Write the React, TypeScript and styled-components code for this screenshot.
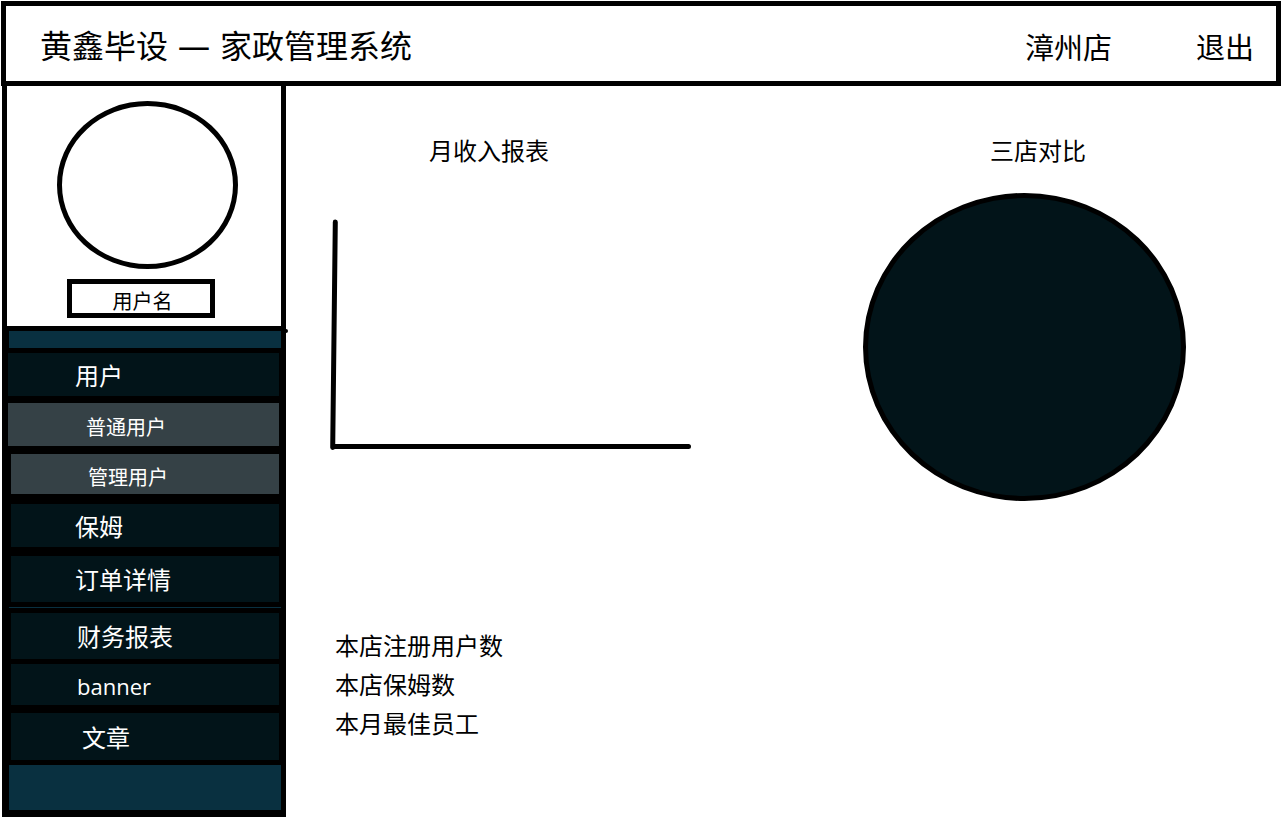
import React from 'react';
import styled, { createGlobalStyle } from 'styled-components';

const ink = '#000';
const navy = '#021419';
const slate = '#354146';
const teal = '#093040';

const GlobalStyle = createGlobalStyle`
  *, *::before, *::after { box-sizing: border-box; }
  body {
    margin: 0;
    background: #fff;
    color: ${ink};
    font-family: 'Open Sans', 'Noto Sans CJK SC', sans-serif;
    font-size: 24px;
    line-height: 32px;
  }
  h1, h2, p, ul { margin: 0; padding: 0; font-weight: 400; }
  ul { list-style: none; }
`;

const Page = styled.div`
  display: flex;
  flex-direction: column;
  min-height: 100vh;
  padding: 1px 3px 0 1px;
`;

const Header = styled.header`
  display: flex;
  align-items: center;
  justify-content: space-between;
  height: 85px;
  padding: 4px 22px 0 34px;
  border: 5px solid ${ink};
`;

const Title = styled.h1`
  display: flex;
  gap: 10px;
  font-size: 32px;
  line-height: 44px;
`;

const HeaderActions = styled.div`
  display: flex;
  gap: 84px;
  padding-top: 4px;
`;

const HeaderButton = styled.button`
  padding: 0;
  border: 0;
  background: none;
  color: inherit;
  font-family: inherit;
  font-size: 29px;
  line-height: 40px;
  cursor: pointer;
`;

const Body = styled.div`
  display: flex;
  flex: 1;
  align-items: flex-start;
  padding-left: 1px;
`;

const Sidebar = styled.aside`
  flex: 0 0 284px;
  border: solid ${ink};
  border-width: 0 5px 7px;
`;

const Profile = styled.section`
  position: relative;
  padding: 15px 43px 8px 50px;
  border-bottom: 5px solid ${ink};

  &::after {
    content: '';
    position: absolute;
    right: -7px;
    bottom: -7px;
    width: 4px;
    height: 4px;
    border-radius: 2px;
    background: ${ink};
  }
`;

const Avatar = styled.div`
  height: 168px;
  border: 5px solid ${ink};
  border-radius: 50%;
`;

const UserName = styled.input`
  display: block;
  width: 148px;
  height: 39px;
  margin: 10px 0 0 10px;
  padding: 4px 0 0 3px;
  border: 5px solid ${ink};
  background: #fff;
  color: inherit;
  font-family: inherit;
  font-size: 20px;
  text-align: center;
`;

const Nav = styled.nav`
  background: ${ink};
`;

const Band = styled.div<{ $height: number }>`
  height: ${(p) => p.$height}px;
  margin-left: 2px;
  background: ${teal};
`;

const Menu = styled.ul`
  padding: 5px 0 0;
`;

const MenuItem = styled.li<{ $gap: number; $wide?: boolean }>`
  padding: 0 2px ${(p) => p.$gap}px ${(p) => (p.$wide ? 1 : 4)}px;
`;

const MenuLink = styled.a<{ $height: number; $size: number; $sub?: boolean; $indent: number }>`
  display: flex;
  align-items: center;
  height: ${(p) => p.$height}px;
  padding: ${(p) => (p.$sub ? 7 : 2)}px 0 0 ${(p) => p.$indent}px;
  background: ${(p) => (p.$sub ? slate : navy)};
  color: #fff;
  font-size: ${(p) => p.$size}px;
  text-decoration: none;
`;

const Rule = styled.li`
  height: 1px;
  margin: 0 0 5px 2px;
  background: ${teal};
`;

const Main = styled.main`
  flex: 1;
  min-width: 0;
  padding: 49px 95px 0 44px;
`;

const Charts = styled.div`
  display: grid;
  grid-template-columns: minmax(0, 361px) minmax(0, 323px);
  justify-content: space-between;
`;

const PanelTitle = styled.h2<{ $indent: number }>`
  padding-left: ${(p) => p.$indent}px;
  font-size: 24px;
  line-height: 32px;
  white-space: nowrap;
`;

const Axes = styled.svg`
  display: block;
  width: 100%;
  margin-top: 51px;
`;

const Pie = styled.div`
  height: 308px;
  margin-top: 26px;
  border: 5px solid ${ink};
  border-radius: 50%;
  background: ${navy};
`;

const Stats = styled.ul`
  padding: 125px 0 0 5px;
  line-height: 39px;
`;

type Entry = {
  label: string;
  height: number;
  gap: number;
  indent: number;
  size: number;
  sub?: boolean;
  wide?: boolean;
  ruled?: boolean;
};

const entries: Entry[] = [
  { label: '用户', height: 43, gap: 7, indent: 67, size: 24, wide: true },
  { label: '普通用户', height: 43, gap: 8, indent: 78, size: 20, sub: true, wide: true },
  { label: '管理用户', height: 40, gap: 10, indent: 77, size: 20, sub: true },
  { label: '保姆', height: 43, gap: 9, indent: 64, size: 24 },
  { label: '订单详情', height: 46, gap: 5, indent: 64, size: 24, ruled: true },
  { label: '财务报表', height: 46, gap: 5, indent: 66, size: 24 },
  { label: 'banner', height: 41, gap: 8, indent: 66, size: 22 },
  { label: '文章', height: 47, gap: 5, indent: 71, size: 24 },
];

export default function App() {
  return (
    <>
      <GlobalStyle />
      <Page>
        <Header>
          <Title>
            <span>黄鑫毕设</span>
            <span>—</span>
            <span>家政管理系统</span>
          </Title>
          <HeaderActions>
            <HeaderButton type="button">漳州店</HeaderButton>
            <HeaderButton type="button">退出</HeaderButton>
          </HeaderActions>
        </Header>
        <Body>
          <Sidebar>
            <Profile>
              <Avatar />
              <UserName aria-label="用户名" defaultValue="用户名" />
            </Profile>
            <Nav>
              <Band $height={17} />
              <Menu>
                {entries.map((e) => (
                  <React.Fragment key={e.label}>
                    <MenuItem $gap={e.gap} $wide={e.wide}>
                      <MenuLink
                        href="#"
                        $height={e.height}
                        $size={e.size}
                        $sub={e.sub}
                        $indent={e.indent}
                      >
                        {e.label}
                      </MenuLink>
                    </MenuItem>
                    {e.ruled && <Rule role="separator" />}
                  </React.Fragment>
                ))}
              </Menu>
              <Band $height={45} />
            </Nav>
          </Sidebar>
          <Main>
            <Charts>
              <section>
                <PanelTitle $indent={99}>月收入报表</PanelTitle>
                <Axes viewBox="0 0 361 232" aria-hidden="true">
                  <path
                    d="M5.3 4 L2.7 229.5 M3 228.5 H358.5"
                    fill="none"
                    stroke={ink}
                    strokeWidth="5"
                    strokeLinecap="round"
                  />
                </Axes>
              </section>
              <section>
                <PanelTitle $indent={127}>三店对比</PanelTitle>
                <Pie />
              </section>
            </Charts>
            <Stats>
              <li>本店注册用户数</li>
              <li>本店保姆数</li>
              <li>本月最佳员工</li>
            </Stats>
          </Main>
        </Body>
      </Page>
    </>
  );
}
